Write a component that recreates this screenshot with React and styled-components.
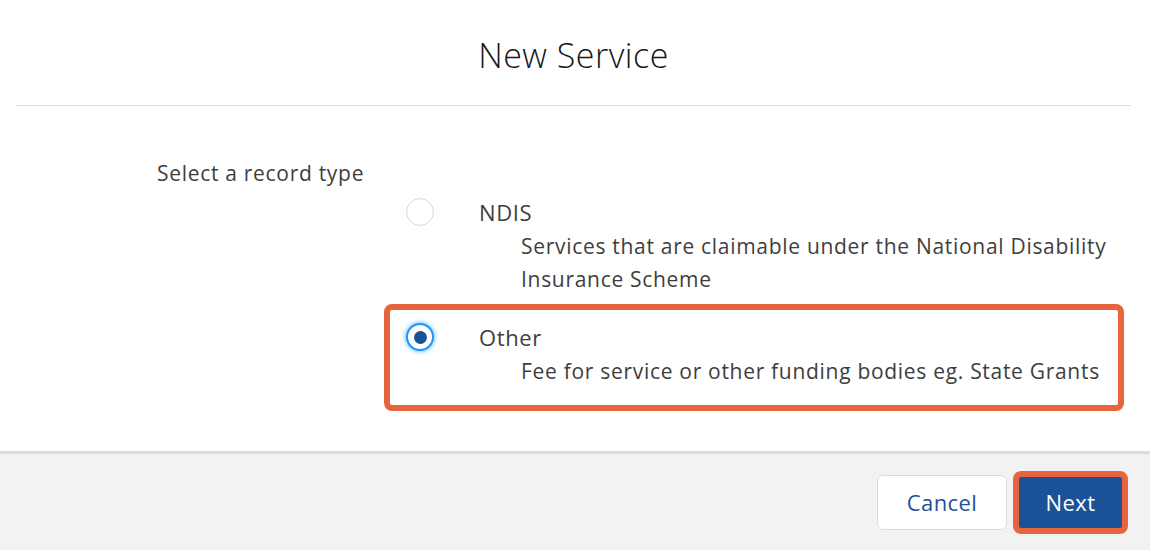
import React from "react";
import styled, { createGlobalStyle, css } from "styled-components";

const Global = createGlobalStyle`
  html, body { margin: 0; padding: 0; background: #ffffff; }
  body { font-family: "Open Sans", "Liberation Sans", sans-serif; color: #3e3e3c; }
  *, *::before, *::after { box-sizing: border-box; }
`;

const Modal = styled.div`
  width: 1150px;
  height: 550px;
  display: flex;
  flex-direction: column;
  background: #fff;
  overflow: hidden;
`;

const Header = styled.header`
  height: 106px;
  margin: 0 19px 0 16px;
  border-bottom: 1px solid #dddbda;
  display: flex;
  align-items: center;
  justify-content: center;
  padding-top: 4px;
`;

const Title = styled.h2`
  margin: 0;
  font-family: "Open Sans", "Liberation Sans", sans-serif;
  font-size: 34px;
  font-weight: 300;
  color: #181818;
  letter-spacing: 0.5px;
`;

const Body = styled.main`
  flex: 1;
  padding: 53px 0 0 157px;
  display: flex;
  flex-direction: column;
`;

const Legend = styled.div`
  font-size: 21px;
  line-height: 28px;
  letter-spacing: 0.7px;
  color: #3e3e3c;
`;

const OptionList = styled.div`
  margin: 11px 0 0 249px;
  display: flex;
  flex-direction: column;
  gap: 27px;
`;

const Option = styled.label`
  position: relative;
  display: grid;
  grid-template-columns: 28px 1fr;
  column-gap: 45px;
  ${(p) =>
    p.$highlighted &&
    css`
      &::after {
        content: "";
        position: absolute;
        top: -19px;
        left: -22px;
        width: 740px;
        bottom: -23px;
        border: 6px solid #e6653f;
        border-radius: 8px;
        pointer-events: none;
      }
    `}
`;

const Radio = styled.span`
  width: 28px;
  height: 28px;
  border-radius: 50%;
  background: #fff;
  border: 1px solid #d8d8d8;
  display: flex;
  align-items: center;
  justify-content: center;
  ${(p) =>
    p.$checked &&
    css`
      border: 2px solid #1b96ff;
      box-shadow: 0 0 4px 1px rgba(27, 150, 255, 0.55);
      &::before {
        content: "";
        width: 13px;
        height: 13px;
        border-radius: 50%;
        background: #1b5297;
      }
    `}
`;

const OptionText = styled.div`
  display: flex;
  flex-direction: column;
`;

const OptionLabel = styled.span`
  font-size: 22px;
  line-height: 28px;
  letter-spacing: 0.6px;
  color: #3e3e3c;
`;

const OptionDesc = styled.span`
  margin: 4px 0 0 42px;
  font-size: 21px;
  line-height: 33px;
  letter-spacing: 0.7px;
  color: #3e3e3c;
  max-width: 620px;
`;

const Footer = styled.footer`
  height: 99px;
  border-top: 3px solid #dcdcdc;
  background: #f2f2f2;
  display: flex;
  align-items: center;
  justify-content: flex-end;
  padding: 0 22px 0 0;
  gap: 6px;
`;

const Button = styled.button`
  font-family: "Open Sans", "Liberation Sans", sans-serif;
  font-size: 22px;
  letter-spacing: 0.4px;
  border-radius: 6px;
  cursor: pointer;
  display: flex;
  align-items: center;
  justify-content: center;
  ${(p) =>
    p.$variant === "brand"
      ? css`
          width: 115px;
          height: 63px;
          background: #1b5297;
          color: #fff;
          border: 6px solid #e6653f;
          border-radius: 8px;
          font-weight: 500;
        `
      : css`
          width: 130px;
          height: 55px;
          background: #fff;
          color: #1b5297;
          border: 1px solid #dddbda;
        `}
`;

const options = [
  {
    id: "ndis",
    label: "NDIS",
    desc: "Services that are claimable under the National Disability Insurance Scheme",
  },
  {
    id: "other",
    label: "Other",
    desc: "Fee for service or other funding bodies eg. State Grants",
    checked: true,
  },
];

export default function App() {
  return (
    <>
      <Global />
      <Modal>
        <Header>
          <Title>New Service</Title>
        </Header>
        <Body>
          <Legend>Select a record type</Legend>
          <OptionList>
            {options.map((o) => (
              <Option key={o.id} $highlighted={o.checked}>
                <Radio $checked={o.checked} />
                <OptionText>
                  <OptionLabel>{o.label}</OptionLabel>
                  <OptionDesc>{o.desc}</OptionDesc>
                </OptionText>
              </Option>
            ))}
          </OptionList>
        </Body>
        <Footer>
          <Button>Cancel</Button>
          <Button $variant="brand">Next</Button>
        </Footer>
      </Modal>
    </>
  );
}
